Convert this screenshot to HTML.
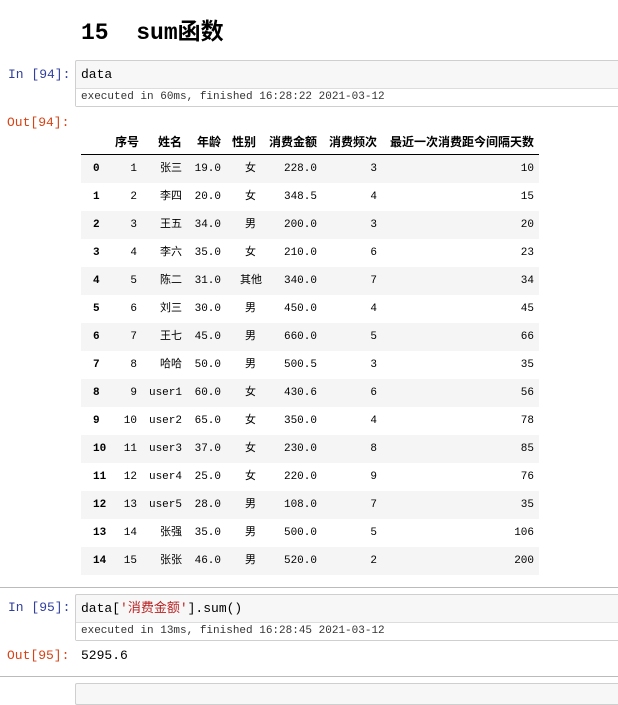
<!DOCTYPE html><html><head><meta charset="utf-8"><style>
body{margin:0;width:618px;height:688px;overflow:hidden;background:#fff;font-family:"Liberation Sans","Noto Sans CJK SC",sans-serif;position:relative}
.a{position:absolute}
.mono{font-family:"Liberation Mono","Noto Sans CJK SC",monospace}
.prompt{font-family:"Liberation Mono",monospace;font-size:13px;color:#303f9f}
.out{color:#d84315}
.box{position:absolute;left:75px;width:560px;border:1px solid #cfcfcf;background:#f7f7f7;border-radius:2px}
.box .code{height:27px;line-height:27px;padding-left:5px;font-size:13px;color:#000;border-bottom:1px solid #ddd}
.box .ex{height:17px;line-height:16px;padding-left:5px;font-size:11px;color:#333;background:#fff}
table{position:absolute;left:81px;top:128px;border-collapse:collapse;font-size:11px;color:#000;table-layout:fixed;width:458px}
th{font-weight:bold;height:26px;text-align:right;padding:0 5px;border-bottom:1px solid #000;font-size:12px;white-space:nowrap;font-family:"Liberation Sans","Noto Sans CJK SC",sans-serif}
td{height:28px;padding:0 5px;text-align:right;white-space:nowrap;font-family:"Liberation Mono","Noto Sans CJK SC",monospace;line-height:14px}
td.c{text-align:center;padding-left:14px;padding-right:0}
tr:nth-child(odd) td{background:#f5f5f5}
td.i{font-weight:bold;text-align:left;padding-left:12px}
.hr{position:absolute;left:0;width:618px;height:1px;background:#bbb}
</style></head><body>
<div class="a mono" style="left:81px;top:12px;font-size:23px;font-weight:bold">15&nbsp;&nbsp;sum函数</div>
<div class="a prompt" style="left:8px;top:67px">In [94]:</div>
<div class="box" style="top:60px"><div class="code mono">data</div><div class="ex mono">executed in 60ms, finished 16:28:22 2021-03-12</div></div>
<div class="a prompt out" style="left:7px;top:115px">Out[94]:</div>
<table>
<colgroup><col style="width:29px"><col style="width:32px"><col style="width:45px"><col style="width:39px"><col style="width:35px"><col style="width:61px"><col style="width:60px"><col style="width:157px"></colgroup>
<thead><tr><th></th><th>序号</th><th>姓名</th><th>年龄</th><th>性别</th><th>消费金额</th><th>消费频次</th><th>最近一次消费距今间隔天数</th></tr></thead>
<tbody>
<tr><td class="i">0</td><td>1</td><td>张三</td><td>19.0</td><td class="c">女</td><td>228.0</td><td>3</td><td>10</td></tr>
<tr><td class="i">1</td><td>2</td><td>李四</td><td>20.0</td><td class="c">女</td><td>348.5</td><td>4</td><td>15</td></tr>
<tr><td class="i">2</td><td>3</td><td>王五</td><td>34.0</td><td class="c">男</td><td>200.0</td><td>3</td><td>20</td></tr>
<tr><td class="i">3</td><td>4</td><td>李六</td><td>35.0</td><td class="c">女</td><td>210.0</td><td>6</td><td>23</td></tr>
<tr><td class="i">4</td><td>5</td><td>陈二</td><td>31.0</td><td class="c">其他</td><td>340.0</td><td>7</td><td>34</td></tr>
<tr><td class="i">5</td><td>6</td><td>刘三</td><td>30.0</td><td class="c">男</td><td>450.0</td><td>4</td><td>45</td></tr>
<tr><td class="i">6</td><td>7</td><td>王七</td><td>45.0</td><td class="c">男</td><td>660.0</td><td>5</td><td>66</td></tr>
<tr><td class="i">7</td><td>8</td><td>哈哈</td><td>50.0</td><td class="c">男</td><td>500.5</td><td>3</td><td>35</td></tr>
<tr><td class="i">8</td><td>9</td><td>user1</td><td>60.0</td><td class="c">女</td><td>430.6</td><td>6</td><td>56</td></tr>
<tr><td class="i">9</td><td>10</td><td>user2</td><td>65.0</td><td class="c">女</td><td>350.0</td><td>4</td><td>78</td></tr>
<tr><td class="i">10</td><td>11</td><td>user3</td><td>37.0</td><td class="c">女</td><td>230.0</td><td>8</td><td>85</td></tr>
<tr><td class="i">11</td><td>12</td><td>user4</td><td>25.0</td><td class="c">女</td><td>220.0</td><td>9</td><td>76</td></tr>
<tr><td class="i">12</td><td>13</td><td>user5</td><td>28.0</td><td class="c">男</td><td>108.0</td><td>7</td><td>35</td></tr>
<tr><td class="i">13</td><td>14</td><td>张强</td><td>35.0</td><td class="c">男</td><td>500.0</td><td>5</td><td>106</td></tr>
<tr><td class="i">14</td><td>15</td><td>张张</td><td>46.0</td><td class="c">男</td><td>520.0</td><td>2</td><td>200</td></tr>
</tbody></table>
<div class="hr" style="top:587px"></div>
<div class="a prompt" style="left:8px;top:600px">In [95]:</div>
<div class="box" style="top:594px"><div class="code mono">data[<span style="color:#ba2121">'消费金额'</span>].sum()</div><div class="ex mono">executed in 13ms, finished 16:28:45 2021-03-12</div></div>
<div class="a prompt out" style="left:7px;top:648px">Out[95]:</div>
<div class="a mono" style="left:81px;top:648px;font-size:13px">5295.6</div>
<div class="hr" style="top:676px"></div>
<div class="box" style="top:683px;height:20px"></div>
</body></html>
